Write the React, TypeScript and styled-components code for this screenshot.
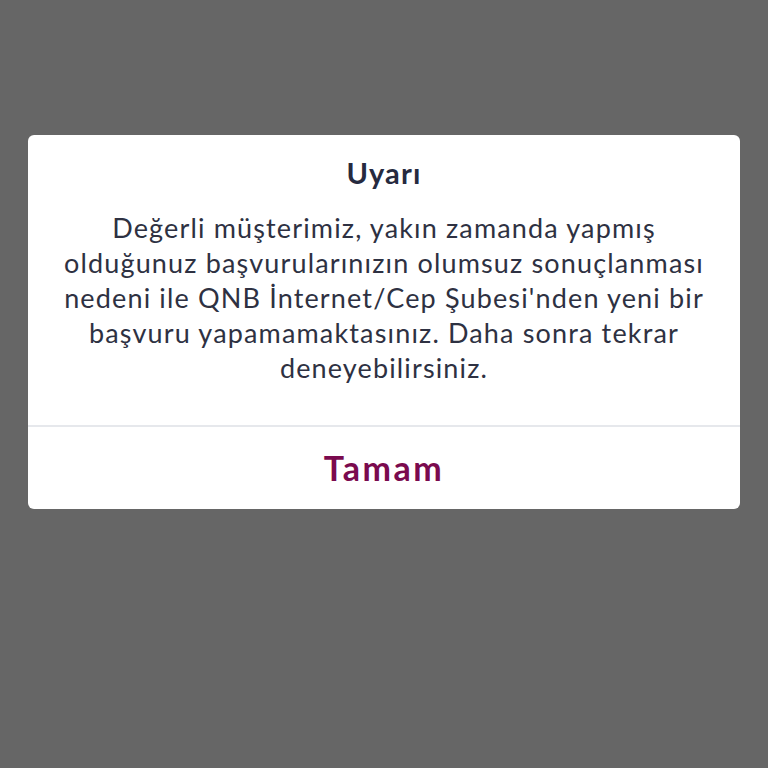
import styled, { createGlobalStyle } from 'styled-components';

const GlobalStyle = createGlobalStyle`
  html, body {
    margin: 0;
    padding: 0;
    background: #666666;
  }
  body {
    font-family: 'Lato', 'Noto Sans', sans-serif;
  }
`;

const Overlay = styled.div`
  width: 100vw;
  height: 100vh;
  background: #666666;
  display: flex;
  justify-content: center;
  align-items: flex-start;
  padding-top: 135px;
  box-sizing: border-box;
`;

const Dialog = styled.div`
  width: 712px;
  background: #ffffff;
  border-radius: 6px;
  overflow: hidden;
  display: flex;
  flex-direction: column;
`;

const Content = styled.div`
  padding: 21px 16px 40px;
  display: flex;
  flex-direction: column;
  align-items: center;
  gap: 20px;
`;

const Title = styled.h2`
  margin: 0;
  font-size: 29px;
  line-height: 34px;
  font-weight: 700;
  color: #262a3f;
  text-align: center;
  letter-spacing: 1.2px;
`;

const Message = styled.p`
  margin: 0;
  font-size: 27px;
  line-height: 35px;
  font-weight: 400;
  color: #2e3142;
  text-align: center;
  letter-spacing: 1.15px;
  white-space: nowrap;
`;

const Divider = styled.div`
  height: 2px;
  background: #e6e8ec;
`;

const ActionButton = styled.button`
  height: 82px;
  border: none;
  background: transparent;
  font-family: 'Lato', 'Noto Sans', sans-serif;
  font-size: 34px;
  font-weight: 700;
  letter-spacing: 2.5px;
  color: #7a0a4e;
  cursor: pointer;
  padding: 0 0 2px;
  &:focus {
    outline: none;
  }
`;

const lines = [
  'Değerli müşterimiz, yakın zamanda yapmış',
  'olduğunuz başvurularınızın olumsuz sonuçlanması',
  "nedeni ile QNB İnternet/Cep Şubesi'nden yeni bir",
  'başvuru yapamamaktasınız. Daha sonra tekrar',
  'deneyebilirsiniz.',
];

function App() {
  return (
    <>
      <GlobalStyle />
      <Overlay>
        <Dialog>
          <Content>
            <Title>Uyarı</Title>
            <Message>
              {lines.map((line, i) => (
                <span key={i}>
                  {line}
                  {i < lines.length - 1 && <br />}
                </span>
              ))}
            </Message>
          </Content>
          <Divider />
          <ActionButton>Tamam</ActionButton>
        </Dialog>
      </Overlay>
    </>
  );
}

export default App;
